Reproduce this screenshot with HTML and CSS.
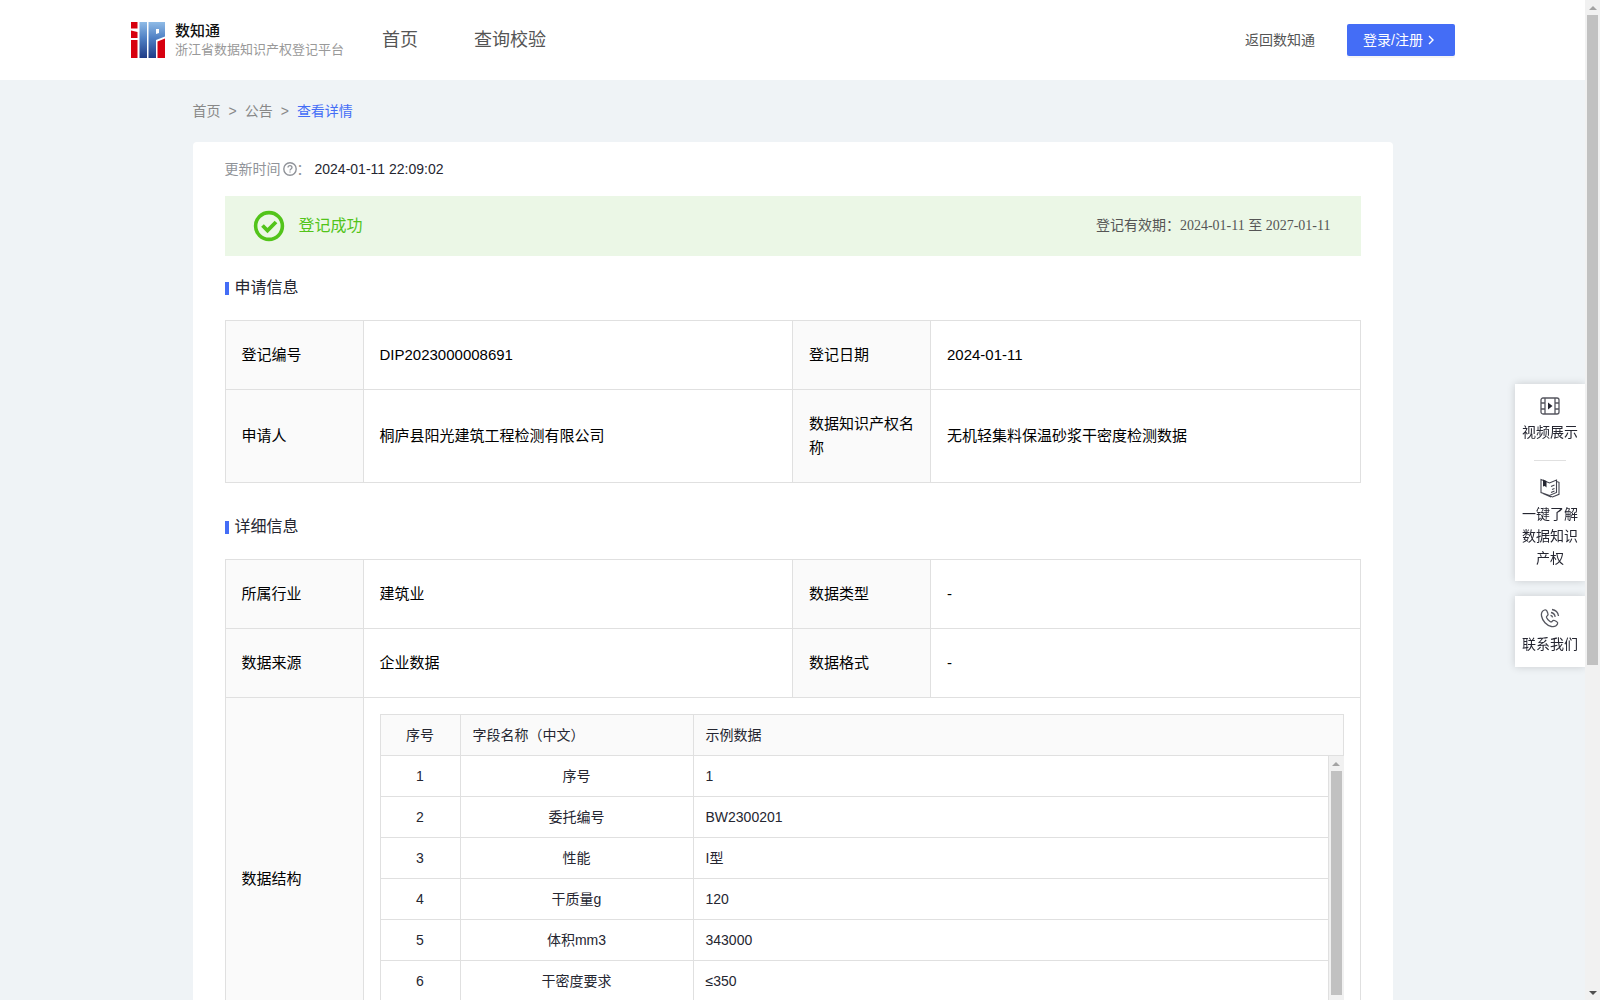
FILE: index.html
```html
<!DOCTYPE html>
<html lang="zh-CN">
<head>
    <meta charset="UTF-8">
    <meta name="viewport" content="width=device-width, initial-scale=1.0">
    <title>浙江省数据知识产权登记平台</title>
    <link rel="stylesheet" href="styles.css">
</head>
<body>

<header class="header">
    <a href="#" class="brand">
        <svg class="brand-logo" width="34" height="36" viewBox="0 0 34 36">
            <defs>
                <linearGradient id="blue" gradientUnits="userSpaceOnUse" x1="0" y1="0" x2="0" y2="36">
                    <stop offset="0" stop-color="#8fbbe6"/>
                    <stop offset="0.45" stop-color="#4f80c4"/>
                    <stop offset="1" stop-color="#1f3b86"/>
                </linearGradient>
            </defs>
            <path fill="#d7000f" d="M0 0h6.500v6.500H0zM0 8.500l6.500 1.500v6H0zM0 18h6.500v18H0zM26.500 19.500l7.500-3V36h-7.500z"/>
            <path fill="url(#blue)" d="M8.500 0h7.500v36H8.500zM17.500 0H34v14.500l-9 3.500v18h-7.500zM25 7v5l3-1V7z" fill-rule="evenodd"/>
        </svg>
        <span class="brand-text">
            <strong>数知通</strong>
            <small>浙江省数据知识产权登记平台</small>
        </span>
    </a>
    <nav class="nav">
        <a href="#">首页</a>
        <a href="#">查询校验</a>
    </nav>
    <a href="#" class="back">返回数知通</a>
    <button type="button" class="login">登录/注册
        <svg width="8" height="10" viewBox="0 0 8 10"><path d="M2 1l4 4-4 4" fill="none" stroke="#fff" stroke-width="1.4"/></svg>
    </button>
</header>

<main class="main">
    <nav class="breadcrumb">
        <a href="#">首页</a><span>&gt;</span><a href="#">公告</a><span>&gt;</span><a href="#" class="current">查看详情</a>
    </nav>

    <div class="card">
        <div class="update">
            <span class="update-label">更新时间</span>
            <svg width="14" height="14" viewBox="0 0 14 14" fill="none" stroke="#909399">
                <circle cx="7" cy="7" r="6.2" stroke-width="1.4"/>
                <path d="M5 5.6c0-2.6 4-2.6 4 0 0 1.3-2 1.4-2 2.8M7 9.4v1.2" stroke-width="1.3"/>
            </svg>
            <span class="update-label">：</span>
            <span class="update-time">2024-01-11 22:09:02</span>
        </div>

        <div class="status">
            <svg width="32" height="32" viewBox="0 0 32 32" fill="none" stroke="#52c41a">
                <circle cx="16" cy="16" r="13.4" stroke-width="3.6"/>
                <path d="M9.500 15.500l5 5 8.500-8.500" stroke-width="3.800"/>
            </svg>
            <span class="status-text">登记成功</span>
            <span class="status-date">登记有效期：2024-01-11 至 2027-01-11</span>
        </div>

        <h2>申请信息</h2>
        <table class="info">
            <colgroup><col class="col-label"><col><col class="col-label"><col></colgroup>
            <tr>
                <th>登记编号</th><td>DIP2023000008691</td>
                <th>登记日期</th><td>2024-01-11</td>
            </tr>
            <tr>
                <th>申请人</th><td>桐庐县阳光建筑工程检测有限公司</td>
                <th>数据知识产权名称</th><td>无机轻集料保温砂浆干密度检测数据</td>
            </tr>
        </table>

        <h2>详细信息</h2>
        <table class="info">
            <colgroup><col class="col-label"><col><col class="col-label"><col></colgroup>
            <tr>
                <th>所属行业</th><td>建筑业</td>
                <th>数据类型</th><td>-</td>
            </tr>
            <tr>
                <th>数据来源</th><td>企业数据</td>
                <th>数据格式</th><td>-</td>
            </tr>
            <tr>
                <th>数据结构</th>
                <td colspan="3" class="nested">
                    <table class="fields">
                        <colgroup><col class="col-no"><col class="col-name"><col></colgroup>
                        <tr><th>序号</th><th>字段名称（中文）</th><th>示例数据</th></tr>
                    </table>
                    <div class="fields-body">
                        <div class="fields-scroll">
                            <table class="fields">
                                <colgroup><col class="col-no"><col class="col-name"><col></colgroup>
                                <tr><td>1</td><td>序号</td><td>1</td></tr>
                                <tr><td>2</td><td>委托编号</td><td>BW2300201</td></tr>
                                <tr><td>3</td><td>性能</td><td>I型</td></tr>
                                <tr><td>4</td><td>干质量g</td><td>120</td></tr>
                                <tr><td>5</td><td>体积mm3</td><td>343000</td></tr>
                                <tr><td>6</td><td>干密度要求</td><td>≤350</td></tr>
                                <tr><td>7</td><td>干密度</td><td>350</td></tr>
                                <tr><td>8</td><td>结论</td><td>合格</td></tr>
                            </table>
                        </div>
                        <div class="scrollbar">
                            <i class="arrow up"></i>
                            <div class="track"><div class="thumb thumb-fields"></div></div>
                            <i class="arrow down"></i>
                        </div>
                    </div>
                </td>
            </tr>
        </table>
    </div>
</main>

<aside class="side">
    <div class="side-box">
        <a href="#">
            <svg width="20" height="20" viewBox="0 0 20 20" fill="none" stroke="#55565f" stroke-width="1.3">
                <rect x="1" y="2" width="18" height="16" rx="2"/>
                <path d="M5 2v16M15 2v16M1 7h4M1 13h4M15 7h4M15 13h4"/>
                <path d="M8 6.500v7l4.500-3.500z" fill="#252631" stroke="none"/>
            </svg>
            视频展示
        </a>
        <hr>
        <a href="#">
            <svg width="20" height="20" viewBox="0 0 20 20" fill="none" stroke="#43444f" stroke-width="1.1">
                <path d="M1 1.500l8.500 3.500 7-3v12.500l-7 3L1 14.500zM16.500 3.500l2.500.8v12l-6.500 2.700-2-.7M3 15.500l8 3.500M11 8.500l3.500-1.500M12 11.500l2.500-1M11 14.500l3.500-1.500"/>
                <path d="M3 1.500l3.500 1.500v6.500L4.800 8 3 8.500z" fill="#252631" stroke="none"/>
            </svg>
            一键了解数据知识产权
        </a>
    </div>
    <div class="side-box">
        <a href="#">
            <svg width="20" height="20" viewBox="0 0 20 20" fill="none" stroke="#55565f" stroke-width="1.3">
                <path d="M4.500 2C2 3 1 5 1.500 8c1 5 5 9.500 10 10.500 3 .5 5-.5 6-2.500.5-1-.2-2-1-2.500l-2-1c-1-.5-1.800 0-2.500 1-.6.800-1.200.5-2 0-1.600-1-2.700-2.200-3.500-4-.3-.8 0-1.200.8-1.800.9-.6 1-1.400.6-2.300l-1-2.400c-.4-1-1.300-1.400-2.400-1z"/>
                <path d="M11 4.500c2.300.4 3.800 2 4.200 4.300M12 1.500c3.800.5 6 3 6.500 6.500M10.500 7.300c1.200.2 1.900.9 2.100 2"/>
            </svg>
            联系我们
        </a>
    </div>
</aside>

<div class="scrollbar page-scrollbar">
    <i class="arrow up"></i>
    <div class="track"><div class="thumb thumb-page"></div></div>
    <i class="arrow down active"></i>
</div>

</body>
</html>
```
FILE: styles.css
```css
* {
    box-sizing: border-box;
}
body {
    margin: 0;
    padding-right: 15px;
    font-family: "Liberation Sans", "Noto Sans CJK SC", sans-serif;
    font-size: 14px;
    line-height: 20px;
    color: #252631;
    background-color: #eff3f6;
}
a {
    color: inherit;
    text-decoration: none;
}
.header {
    display: flex;
    align-items: center;
    height: 80px;
    padding: 0 130px 0 131px;
    background: #fff;
    color: #555;
}
.brand {
    display: flex;
    align-items: center;
    gap: 10px;
}
.brand-text {
    display: flex;
    flex-direction: column;
}
.brand-text strong {
    font-size: 15px;
    font-weight: 500;
    color: #111;
}
.brand-text small {
    font-size: 13px;
    line-height: 18px;
    color: #999;
}
.nav {
    display: flex;
    gap: 56px;
    margin-left: 38px;
    font-size: 18px;
}
.back {
    margin-left: auto;
    margin-right: 32px;
}
.login {
    display: flex;
    align-items: center;
    gap: 4px;
    height: 32px;
    padding: 0 20px 0 16px;
    border: none;
    border-radius: 2px;
    background: #446df6;
    color: #fff;
    font-family: inherit;
    font-size: 14px;
    line-height: 20px;
    box-shadow: 0 2px 0 rgba(0, 0, 0, 0.04);
}
.main {
    max-width: 1200px;
    margin: 0 auto;
    padding-bottom: 120px;
}
.breadcrumb {
    display: flex;
    gap: 8px;
    line-height: 62px;
    color: #888;
}
.breadcrumb .current {
    color: #446df6;
}
.card {
    padding: 0 32px 300px;
    border-radius: 4px;
    background: #fff;
}
.update {
    display: flex;
    align-items: center;
    height: 54px;
}
.update-label {
    color: #909399;
}
.update svg {
    margin-left: 2px;
}
.update-time {
    margin-left: 4px;
}
.status {
    display: flex;
    align-items: center;
    height: 60px;
    padding: 0 30px 0 28px;
    background: #ebf7e6;
}
.status-text {
    margin-left: 14px;
    font-size: 16px;
    color: #52c41a;
}
.status-date {
    margin-left: auto;
    font-family: "Liberation Serif", "Noto Sans CJK SC", serif;
    color: #555;
}
h2 {
    display: flex;
    align-items: center;
    gap: 6px;
    height: 64px;
    margin: 0;
    font-size: 16px;
    font-weight: normal;
}
h2::before {
    content: "";
    width: 4px;
    height: 13px;
    background: #446df6;
}
table {
    width: 100%;
    border-collapse: collapse;
    table-layout: fixed;
}
th, td {
    border: 1px solid #e0e0e0;
    text-align: left;
    font-weight: normal;
}
th {
    background: #fafafa;
}
.info {
    margin-bottom: 12px;
    font-size: 15px;
    line-height: 24px;
    color: #000;
}
.col-label {
    width: 138px;
}
.info th, .info td {
    padding: 22px 16px;
}
.info .nested {
    padding: 16px;
}
.fields {
    font-size: 14px;
    line-height: 20px;
    color: #252631;
}
.info .fields th, .info .fields td {
    padding: 10px 12px;
}
.col-no {
    width: 80px;
}
.col-name {
    width: 233px;
}
.fields th:first-child, .fields td:first-child, .fields td:nth-child(2) {
    text-align: center;
}
.fields-body {
    display: flex;
    height: 288px;
}
.fields-scroll {
    flex: 1;
    overflow-y: auto;
    scrollbar-width: none;
}
.fields-scroll tr:first-child td {
    border-top: none;
}
.side {
    position: fixed;
    top: 384px;
    right: 15px;
    width: 70px;
}
.side-box {
    margin-bottom: 15px;
    padding: 12px 6px;
    background: #fff;
    box-shadow: 0 0 8px rgba(0, 0, 0, 0.16);
}
.side-box a {
    display: flex;
    flex-direction: column;
    align-items: center;
    gap: 5px;
    line-height: 22px;
    text-align: center;
}
.side-box hr {
    width: 32px;
    margin: 17px auto;
    border: none;
    border-top: 1px solid #e0e0e0;
}
.scrollbar {
    display: flex;
    flex-direction: column;
    width: 15px;
    background: #f1f1f1;
}
.page-scrollbar {
    position: fixed;
    top: 0;
    right: 0;
    bottom: 0;
}
.arrow {
    display: flex;
    align-items: center;
    justify-content: center;
    height: 15px;
    color: #a3a3a3;
}
.arrow.active {
    color: #505050;
}
.arrow::before {
    content: "";
    border: 4px solid transparent;
}
.up::before {
    border-top: none;
    border-bottom-color: currentColor;
}
.down::before {
    border-bottom: none;
    border-top-color: currentColor;
}
.track {
    flex: 1;
    padding: 0 2px;
}
.thumb {
    background: #c1c1c1;
}
.thumb-page {
    height: 67%;
}
.thumb-fields {
    height: 87%;
}
```
